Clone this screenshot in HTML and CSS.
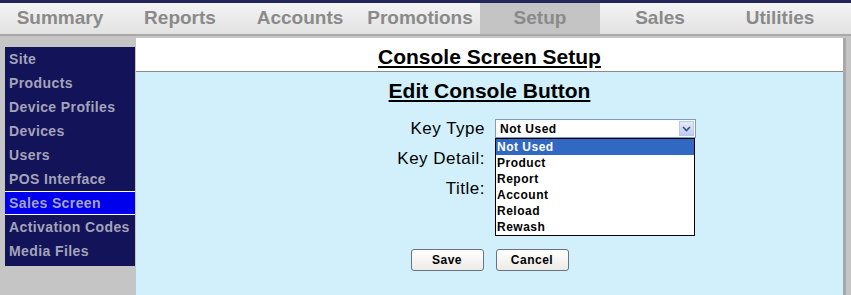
FILE: index.html
```html
<!DOCTYPE html>
<html lang="en">
<head>
    <meta charset="UTF-8">
    <title>Console Screen Setup</title>
    <link rel="stylesheet" href="styles.css">
</head>
<body>

<div class="topline"></div>
<div class="tabs">
    <div class="tab">Summary</div>
    <div class="tab">Reports</div>
    <div class="tab">Accounts</div>
    <div class="tab">Promotions</div>
    <div class="tab active">Setup</div>
    <div class="tab">Sales</div>
    <div class="tab">Utilities</div>
</div>

<div class="layout">
    <div class="sidebar">
        <div class="side-item">Site</div>
        <div class="side-item">Products</div>
        <div class="side-item">Device Profiles</div>
        <div class="side-item">Devices</div>
        <div class="side-item">Users</div>
        <div class="side-item">POS Interface</div>
        <div class="side-item current">Sales Screen</div>
        <div class="side-item">Activation Codes</div>
        <div class="side-item">Media Files</div>
    </div>

    <div class="content">
        <div class="page-title"><span>Console Screen Setup</span></div>
        <div class="form-area">
            <div class="form-title"><span>Edit Console Button</span></div>

            <div class="form-row">
                <div class="label">Key Type</div>
                <div class="select-wrap">
                    <div class="select">
                        <span>Not Used</span>
                        <span class="arrow">
                            <svg width="9" height="6" viewBox="0 0 9 6"><path d="M1 1 L4.5 4.5 L8 1" fill="none" stroke="#3a4f7a" stroke-width="1.6"/></svg>
                        </span>
                    </div>
                    <div class="dropdown">
                        <div class="opt picked">Not Used</div>
                        <div class="opt">Product</div>
                        <div class="opt">Report</div>
                        <div class="opt">Account</div>
                        <div class="opt">Reload</div>
                        <div class="opt">Rewash</div>
                    </div>
                </div>
            </div>
            <div class="form-row">
                <div class="label">Key Detail:</div>
            </div>
            <div class="form-row">
                <div class="label">Title:</div>
            </div>

            <div class="buttons">
                <button class="btn">Save</button>
                <button class="btn">Cancel</button>
            </div>
        </div>
    </div>
</div>

</body>
</html>
```

FILE: styles.css
```css
body {
    margin: 0;
    font-family: "Liberation Sans", Arial, sans-serif;
    background-color: #c5c5c5;
    color: #000;
}

.topline {
    height: 3px;
    background-color: #22265a;
}

.tabs {
    display: grid;
    grid-template-columns: repeat(7, 120px);
    height: 31px;
    background: linear-gradient(#f4f4f4, #e2e2e2);
    border-bottom: 2px solid #a9a9a9;
}

.tab {
    display: flex;
    align-items: center;
    justify-content: center;
    font-size: 19px;
    font-weight: bold;
    color: #8a8a8a;
    padding-bottom: 1px;
}

.tab.active {
    background-color: #c4c4c4;
}

.layout {
    display: flex;
    padding-top: 2px;
}

.sidebar {
    width: 130px;
    height: 219px;
    margin: 9px 1px 0 5px;
    background-color: #13135a;
}

.side-item {
    height: 24px;
    line-height: 24px;
    padding-left: 4px;
    font-size: 14px;
    letter-spacing: 0.4px;
    font-weight: bold;
    color: #a4a4b8;
    white-space: nowrap;
}

.side-item.current {
    height: 22px;
    line-height: 22px;
    background-color: #0000ec;
    border-top: 1px solid #fff;
    border-bottom: 1px solid #fff;
}

.content {
    width: 707px;
    height: 257px;
    border-right: 3px solid #a8a8a8;
}

.page-title {
    height: 33px;
    background-color: #fff;
    border-bottom: 1px solid #8a8a8a;
    text-align: center;
    font-size: 21px;
    font-weight: bold;
    line-height: 37px;
}

.page-title span,
.form-title span {
    text-decoration: underline;
}

.form-area {
    height: 223px;
    background-color: #d2f0fc;
    padding-top: 1px;
}

.form-title {
    height: 45px;
    text-align: center;
    font-size: 21px;
    font-weight: bold;
    line-height: 36px;
}

.form-row {
    display: flex;
    height: 30px;
}

.label {
    width: 349px;
    text-align: right;
    font-size: 17px;
    letter-spacing: 0.5px;
    padding-top: 1px;
}

.select-wrap {
    position: relative;
    margin-left: 10px;
    margin-top: 1px;
}

.select {
    width: 195px;
    height: 17px;
    border: 1px solid #7f9db9;
    background-color: #fff;
    display: flex;
    align-items: center;
    justify-content: space-between;
    font-size: 12px;
    letter-spacing: 0.5px;
    font-weight: bold;
    padding-left: 4px;
}

.arrow {
    width: 15px;
    height: 15px;
    margin-right: 1px;
    background: linear-gradient(#e4ebfc, #bccdf5);
    border: 1px solid #b8c8ec;
    box-sizing: border-box;
    display: flex;
    align-items: center;
    justify-content: center;
}

.dropdown {
    position: absolute;
    top: 19px;
    left: 0;
    width: 198px;
    border: 1px solid #000;
    background-color: #fff;
}

.opt {
    height: 16px;
    line-height: 16px;
    font-size: 12px;
    letter-spacing: 0.5px;
    font-weight: bold;
    padding-left: 1px;
}

.opt.picked {
    background-color: #3168c4;
    color: #fff;
}

.buttons {
    display: flex;
    justify-content: center;
    gap: 12px;
    margin-top: 41px;
}

.btn {
    width: 73px;
    height: 22px;
    font-family: "Liberation Sans", Arial, sans-serif;
    font-size: 12px;
    letter-spacing: 0.5px;
    font-weight: bold;
    background: linear-gradient(#ffffff, #ecebe6);
    border: 1px solid #6a7480;
    border-radius: 3px;
    padding: 0;
}
```
